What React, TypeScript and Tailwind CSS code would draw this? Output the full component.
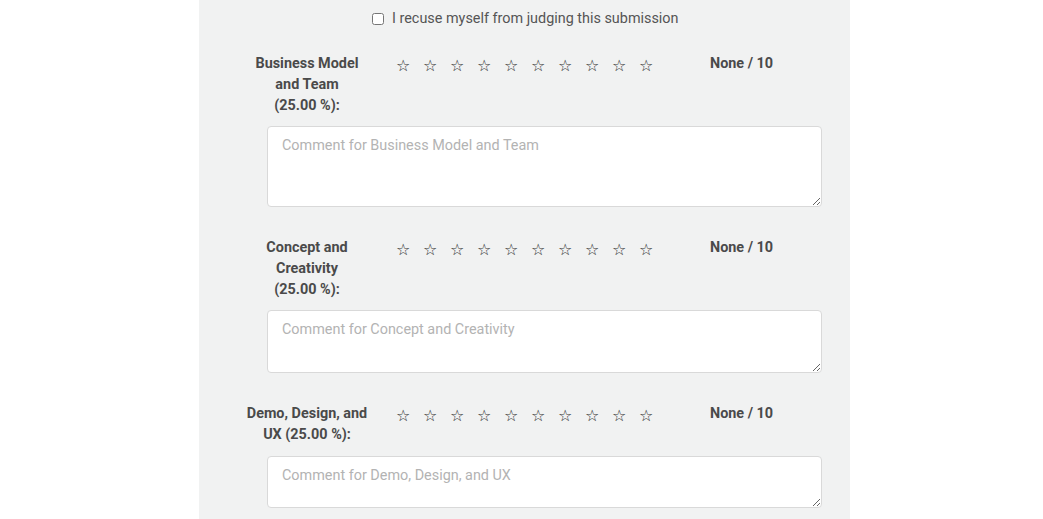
export default function App() {
  const criteria = [
    { name: "Business Model and Team", label: ["Business Model", "and Team", "(25.00 %):"], h: "h-[81px]", mt: "mt-[10px]" },
    { name: "Concept and Creativity", label: ["Concept and", "Creativity", "(25.00 %):"], h: "h-[63px]", mt: "mt-[10px]" },
    { name: "Demo, Design, and UX", label: ["Demo, Design, and", "UX (25.00 %):"], h: "h-[52px]", mt: "mt-[11px]" },
  ];

  return (
    <div className="min-h-screen bg-white font-['Roboto',sans-serif]">
      <div className="ml-[199px] w-[651px] h-[519px] overflow-hidden bg-[#f1f2f2] pt-[8px]">
        {/* Recuse */}
        <label className="flex items-center h-[21px] pl-[173px] text-[14.4px] text-[#555]">
          <input type="checkbox" className="w-[12px] h-[12px] mr-[8px] mt-[1px]" />
          I recuse myself from judging this submission
        </label>

        <div className="mt-[24px] flex flex-col gap-[30px]">
          {criteria.map((c) => (
            <div key={c.name}>
              <div className="flex items-start">
                <div className="w-[140px] ml-[38px] text-center text-[14.4px] leading-[21px] font-bold text-[#4a4a4a]">
                  {c.label.map((l) => (
                    <div key={l}>{l}</div>
                  ))}
                </div>
                <div className="ml-[19px] flex text-[16px] leading-[21px] text-[#333] font-['DejaVu_Sans',sans-serif] pt-[2px]">
                  {Array.from({ length: 10 }).map((_, i) => (
                    <span key={i} className="w-[27px]">
                      ☆
                    </span>
                  ))}
                </div>
                <div className="ml-[44px] text-[14.4px] leading-[21px] font-bold text-[#4a4a4a]">None / 10</div>
              </div>
              <textarea
                placeholder={`Comment for ${c.name}`}
                className={`block ${c.mt} ml-[68px] w-[555px] ${c.h} bg-white border border-[#d9d9d9] rounded-[4px] px-[14px] py-[8px] text-[14.4px] text-[#555] placeholder:text-[#b3b3b3] outline-none`}
              />
            </div>
          ))}
        </div>
      </div>
    </div>
  );
}
